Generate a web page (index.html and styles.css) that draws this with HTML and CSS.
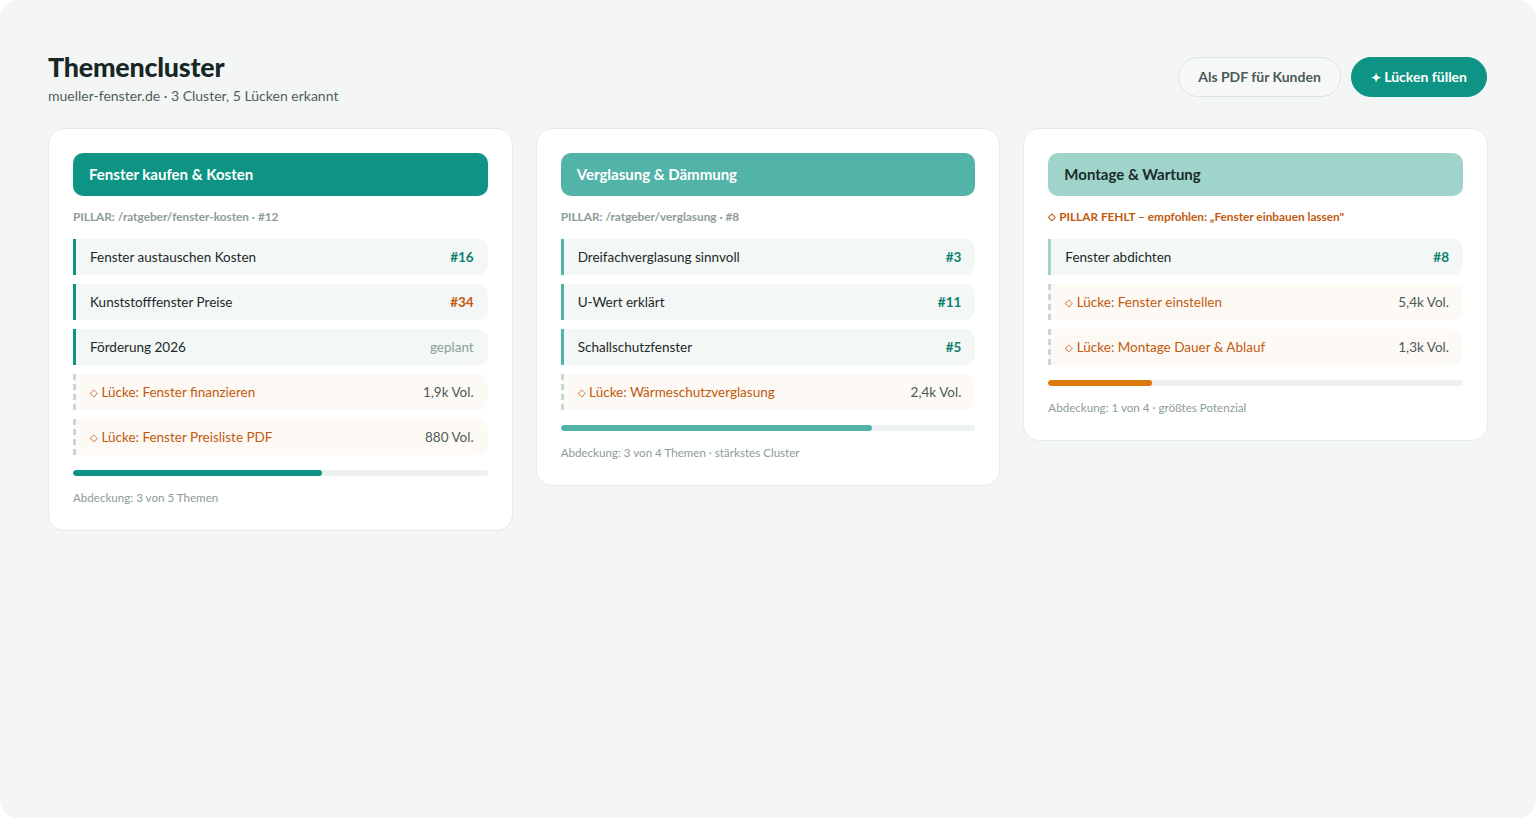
FILE: index.html
```html
<!DOCTYPE html>
<html lang="de">
<head>
<meta charset="utf-8">
<title>Themencluster</title>
<link rel="stylesheet" href="styles.css">
</head>
<body>
<div class="page">
  <header class="top">
    <div class="titles">
      <h1 class="title">Themencluster</h1>
      <p class="subtitle">mueller-fenster.de · 3 Cluster, 5 Lücken erkannt</p>
    </div>
    <div class="actions">
      <button class="btn btn-ghost">Als PDF für Kunden</button>
      <button class="btn btn-primary"><span class="spark">✦</span> Lücken füllen</button>
    </div>
  </header>

  <main class="grid">
    <section class="card c1">
      <div class="cluster-head">Fenster kaufen &amp; Kosten</div>
      <div class="pillar">PILLAR: /ratgeber/fenster-kosten · #12</div>
      <ul class="rows">
        <li class="row"><span>Fenster austauschen Kosten</span><span class="rank">#16</span></li>
        <li class="row"><span>Kunststofffenster Preise</span><span class="rank warn">#34</span></li>
        <li class="row"><span>Förderung 2026</span><span class="muted">geplant</span></li>
        <li class="row gap"><span class="gap-label"><span class="dia">◇</span> Lücke: Fenster finanzieren</span><span class="vol">1,9k Vol.</span></li>
        <li class="row gap"><span class="gap-label"><span class="dia">◇</span> Lücke: Fenster Preisliste PDF</span><span class="vol">880 Vol.</span></li>
      </ul>
      <div class="bar"><div class="fill" style="width:60%"></div></div>
      <div class="foot">Abdeckung: 3 von 5 Themen</div>
    </section>

    <section class="card c2">
      <div class="cluster-head">Verglasung &amp; Dämmung</div>
      <div class="pillar">PILLAR: /ratgeber/verglasung · #8</div>
      <ul class="rows">
        <li class="row"><span>Dreifachverglasung sinnvoll</span><span class="rank">#3</span></li>
        <li class="row"><span>U-Wert erklärt</span><span class="rank">#11</span></li>
        <li class="row"><span>Schallschutzfenster</span><span class="rank">#5</span></li>
        <li class="row gap"><span class="gap-label"><span class="dia">◇</span> Lücke: Wärmeschutzverglasung</span><span class="vol">2,4k Vol.</span></li>
      </ul>
      <div class="bar"><div class="fill" style="width:75%"></div></div>
      <div class="foot">Abdeckung: 3 von 4 Themen · stärkstes Cluster</div>
    </section>

    <section class="card c3">
      <div class="cluster-head">Montage &amp; Wartung</div>
      <div class="pillar missing"><span class="dia">◇</span> PILLAR FEHLT – empfohlen: „Fenster einbauen lassen"</div>
      <ul class="rows">
        <li class="row"><span>Fenster abdichten</span><span class="rank">#8</span></li>
        <li class="row gap"><span class="gap-label"><span class="dia">◇</span> Lücke: Fenster einstellen</span><span class="vol">5,4k Vol.</span></li>
        <li class="row gap"><span class="gap-label"><span class="dia">◇</span> Lücke: Montage Dauer &amp; Ablauf</span><span class="vol">1,3k Vol.</span></li>
      </ul>
      <div class="bar"><div class="fill" style="width:25%"></div></div>
      <div class="foot">Abdeckung: 1 von 4 · größtes Potenzial</div>
    </section>
  </main>
</div>
</body>
</html>
```

FILE: styles.css
```css
* { box-sizing: border-box; }

html, body {
  margin: 0;
  height: 100%;
  background: #ffffff;
}

body {
  font-family: Lato, "Noto Sans", sans-serif;
  color: #1b2928;
}

.page {
  height: 818px;
  background: #f4f6f5;
  border-radius: 18px;
  padding: 50px 48px 0 48px;
}

.top {
  display: flex;
  justify-content: space-between;
  align-items: flex-start;
}

.title {
  margin: 0;
  font-size: 26.8px;
  font-weight: 900;
  letter-spacing: -0.2px;
  line-height: 34px;
  color: #172726;
}

.subtitle {
  margin: 3px 0 0;
  font-size: 14px;
  color: #4f5e5c;
  line-height: 18px;
}

.actions {
  display: flex;
  gap: 10px;
  margin-top: 7px;
  margin-right: 1px;
}

.btn {
  font-family: inherit;
  font-size: 14px;
  font-weight: 700;
  height: 40px;
  border-radius: 20px;
  padding: 0 19px 2px;
  cursor: pointer;
}

.btn-ghost {
  background: #f6f8f7;
  border: 1px solid #dce4e1;
  color: #4c5a58;
  padding-bottom: 1px;
}

.btn-primary {
  background: #0e9484;
  border: 1px solid #0e9484;
  color: #ffffff;
}

.spark { font-size: 12px; }

.grid {
  margin-top: 23px;
  display: grid;
  grid-template-columns: repeat(3, 1fr);
  gap: 23px;
  align-items: start;
}

.card {
  background: #ffffff;
  border: 1px solid #e5ebe9;
  border-radius: 16px;
  padding: 24px 24px 25px;
}

.cluster-head {
  height: 43px;
  border-radius: 10px;
  display: flex;
  align-items: center;
  padding: 0 16px 2px;
  font-size: 15px;
  font-weight: 700;
  color: #ffffff;
}

.c1 .cluster-head { background: #0e9484; }
.c2 .cluster-head { background: #52b3a8; }
.c3 .cluster-head { background: #9fd4cb; color: #1b2b2a; }

.pillar {
  margin-top: 14px;
  font-size: 11.8px;
  font-weight: 700;
  line-height: 14px;
  height: 14px;
  color: #8c9c99;
}

.pillar.missing { color: #c25a0e; }

.rows {
  list-style: none;
  margin: 15px 0 0;
  padding: 0;
  display: flex;
  flex-direction: column;
  gap: 9px;
}

.row {
  height: 36px;
  display: flex;
  align-items: center;
  justify-content: space-between;
  padding: 0 14px 0 14px;
  background: #f3f7f6;
  border-left: 3px solid #0e9484;
  border-radius: 0 10px 10px 0;
  font-size: 13.5px;
  color: #1b2928;
}

.c2 .row { border-left-color: #52b3a8; }
.c3 .row { border-left-color: #9fd4cb; }

.row.gap,
.c2 .row.gap,
.c3 .row.gap {
  background: #fdf9f5;
  border-left: 3px dashed #c9d7d3;
}

.rank {
  font-weight: 700;
  color: #0e8070;
}

.rank.warn { color: #c25a0e; }

.muted { color: #8c9c99; }

.gap-label { color: #c25a0e; }

.dia {
  font-size: 10px;
  line-height: 0;
  vertical-align: 1px;
}

.vol { color: #4c5a58; }

.bar {
  margin-top: 15px;
  height: 6px;
  border-radius: 3px;
  background: #edf2f1;
  overflow: hidden;
}

.fill {
  height: 100%;
  border-radius: 3px;
}

.c1 .fill { background: #0e9484; }
.c2 .fill { background: #52b3a8; }
.c3 .fill { background: #dc780c; }

.foot {
  margin-top: 15px;
  font-size: 11.6px;
  line-height: 14px;
  color: #8c9c99;
}
```
